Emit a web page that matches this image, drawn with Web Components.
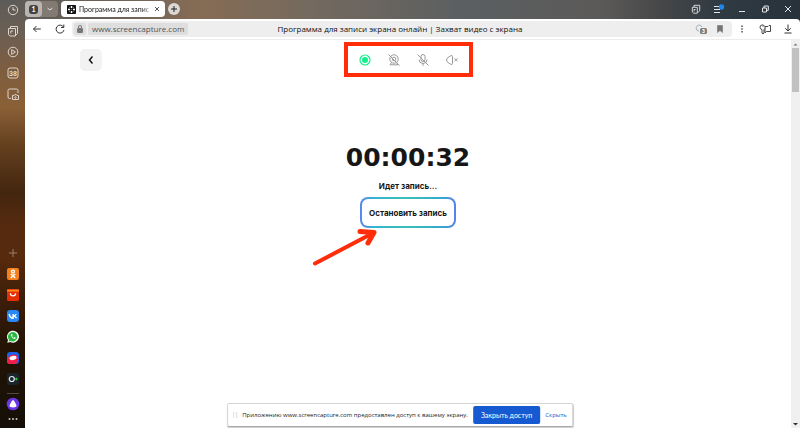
<!DOCTYPE html>
<html lang="ru">
<head>
<meta charset="utf-8">
<title>Программа для записи экрана онлайн</title>
<style>
    html, body {
        margin: 0;
        height: 100%;
    }
    body {
        font-family: Lato, Roboto, sans-serif;
        color: #222;
        overflow: hidden;
    }
</style>
</head>
<body>
<browser-window>
    <side-bar slot="side"></side-bar>
    <tab-strip slot="tabs" title="Программа для запис"></tab-strip>
    <address-bar slot="address" host="www.screencapture.com" heading="Программа для записи экрана онлайн | Захват видео с экрана"></address-bar>
    <recorder-page time="00:00:32">
        <span slot="status">Идет запись...</span>
        <span slot="action">Остановить запись</span>
    </recorder-page>
    <scroll-track slot="scroll"></scroll-track>
    <share-notice slot="notice" action="Закрыть доступ" dismiss="Скрыть">Приложению www.screencapture.com предоставлен доступ к вашему экрану.</share-notice>
</browser-window>

<script>
const reset = `
    :host, * { box-sizing: border-box; }
    button { margin: 0; padding: 0; border: 0; background: none; font: inherit; color: inherit; }
    svg { display: block; fill: none; stroke: currentColor; }
`;

class BrowserWindow extends HTMLElement {
    constructor() {
        super();
        this.attachShadow({ mode: 'open' });
    }

    connectedCallback() {
        this.shadowRoot.innerHTML = `
            <style>
                ${reset}
                :host {
                    display: flex;
                    position: relative;
                    height: 100vh;
                    background: linear-gradient(90deg, #5f5b57 0%, #67605a 12%, #866c55 25%, #756a5e 38%, #5b5f61 58%, #5c5a59 75%, #454647 83%, #2f3a43 90%, #28323b 100%);
                }
                .main {
                    flex: 1;
                    min-width: 0;
                    display: flex;
                    flex-direction: column;
                }
                .sheet {
                    flex: 1;
                    min-height: 0;
                    display: flex;
                    flex-direction: column;
                    background: #fff;
                    border-radius: 4px 4px 0 0;
                    overflow: hidden;
                }
                .view {
                    flex: 1;
                    min-height: 0;
                    display: flex;
                }
            </style>
            <slot name="side"></slot>
            <div class="main">
                <slot name="tabs"></slot>
                <div class="sheet">
                    <slot name="address"></slot>
                    <div class="view">
                        <slot></slot>
                        <slot name="scroll"></slot>
                    </div>
                </div>
            </div>
            <slot name="notice"></slot>
        `;
    }
}

class SideBar extends HTMLElement {
    constructor() {
        super();
        this.attachShadow({ mode: 'open' });
    }

    connectedCallback() {
        const tools = [
            ['История', '<circle cx="7" cy="7" r="4.7"/><path d="M7 4.2V7h2.6"/>'],
            ['Коллекции', '<path d="M4.500 4V2.500h7v7l-1.500 1.500H9.500"/><path d="M2.500 4.500h7v7.500H4L2.500 10.500zM4.800 9.500V7h2.400"/>'],
            ['Видео', '<circle cx="7" cy="7" r="4.8"/><path d="M5.700 4.600v4.800L9.400 7z"/>'],
            ['Погода', '<rect x="2" y="2" width="10" height="10" rx="2"/><text x="7" y="9.500" text-anchor="middle">38</text>'],
            ['Скриншот', '<path d="M5 11.500H3.500A1.500 1.500 0 0 1 2 10V3.500A1.500 1.500 0 0 1 3.500 2h7A1.500 1.500 0 0 1 12 3.500V6"/><path d="M6.500 8.500h1.500l.5-.8h2l.5.8h1.500v4h-6z"/><circle cx="9.500" cy="10.500" r=".7"/>']
        ];
        const apps = [
            ['Одноклассники', '<rect x="1" y="1" width="12" height="12" rx="2" fill="#f4801f"/><g stroke="#fff" stroke-width="1.300"><circle cx="7" cy="4.600" r="1.500"/><path d="M4.700 7.300q2.300 1.500 4.600 0M7 8.400 4.900 11M7 8.400 9.100 11"/></g>'],
            ['AliExpress', '<rect x="1" y="1" width="12" height="12" rx="1.500" fill="#e62e04"/><path d="M1 1.700h12v1.800H1z" fill="#ff8a1c"/><path d="M4.400 5.300c0 3.500 5.200 3.500 5.200 0" stroke="#fff" stroke-width="1.300"/>'],
            ['ВКонтакте', '<rect x="1" y="1" width="12" height="12" rx="3" fill="#2787f5"/><path d="M3.200 5c.5 2.700 1.800 4.200 3.900 4.200V5M7.100 7.200C8.600 7 9.600 6.300 10.200 5M7.500 7.100c1.500.1 2.500.8 3 2.100" stroke="#fff" stroke-width="1.400"/>'],
            ['WhatsApp', '<path d="M1.300 12.800 2 10A6 6 0 1 1 4.200 12z" fill="#fff"/><path d="m2.500 11.600.5-1.800A4.800 4.800 0 1 1 4.500 11z" fill="#2cb742"/><path d="M5 4.200c-.8 1.500 2.400 5.400 4.400 4.500l.3-1-1.300-.6-.6.6C6.900 7.400 6.300 6.500 6.100 5.900l.5-.6L6 4z" fill="#fff"/>'],
            ['Портал', '<rect x="1" y="1" width="12" height="12" rx="3" fill="#1764e8"/><path d="M1 8v2a3 3 0 0 0 3 3h6l3-5z" fill="#f01e4d"/><ellipse cx="7" cy="7" rx="4.300" ry="2.700" transform="rotate(-12 7 7)" fill="#fff" stroke="#f01e4d" stroke-width="1.400"/>'],
            ['Запись', '<rect x="1" y="1" width="12" height="12" rx="3" fill="#1c252b"/><circle cx="5.800" cy="7" r="2.500" stroke="#e5edf0" stroke-width="1.200"/><path d="M9 7h2.600M10.300 5.700v2.600" stroke="#2be03d"/>']
        ];
        const item = ([label, art]) => `<button aria-label="${label}"><svg width="14" height="14" viewBox="0 0 14 14">${art}</svg></button>`;

        this.shadowRoot.innerHTML = `
            <style>
                ${reset}
                :host {
                    flex: none;
                    width: 25px;
                    display: flex;
                    flex-direction: column;
                    justify-content: space-between;
                    align-items: center;
                    color: #ddd5cd;
                    background: linear-gradient(#5c5b59 0%, #6c5f53 8%, #7d5d40 16%, #8a6036 25%, #64401f 34%, #43260f 45%, #542a0f 52%, #572a0d 60%, #3f1f09 69%, #251405 80%, #140f07 100%);
                }
                nav {
                    display: flex;
                    flex-direction: column;
                    align-items: center;
                    gap: 7px;
                    padding-top: 3px;
                }
                .apps svg { stroke: none; }
                .apps { padding: 0 0 5px; }
                .apps .plus svg { stroke: #9a7f70; }
                .alice {
                    width: 12px;
                    display: flex;
                    justify-content: center;
                    border-top: 1px solid #53483c;
                    padding-top: 3px;
                }
                .alice svg { flex: none; }
                .dots { margin-top: -5px; }
                .dots svg { fill: #cfc9c1; }
                text { font: 700 7px Roboto, sans-serif; fill: currentColor; stroke: none; }
            </style>
            <nav aria-label="Инструменты">${tools.map(item).join('')}</nav>
            <nav class="apps" aria-label="Приложения">
                <button class="plus" aria-label="Добавить"><svg width="14" height="14" viewBox="0 0 14 14"><path d="M7 3v8M3 7h8"/></svg></button>
                ${apps.map(item).join('')}
                <button class="alice" aria-label="Алиса"><svg width="14" height="14" viewBox="0 0 14 14"><circle cx="7" cy="7" r="6.300" fill="#6b36e8"/><path d="M7 3c.8 0 3.500 4.600 3.500 5.800C10.500 10 9 10.400 7 10.400S3.500 10 3.500 8.800C3.500 7.600 6.200 3 7 3z" fill="#fff"/></svg></button>
                <button class="dots" aria-label="Ещё"><svg width="14" height="10" viewBox="0 0 14 10"><circle cx="3.500" cy="6" r="1"/><circle cx="7" cy="6" r="1"/><circle cx="10.500" cy="6" r="1"/></svg></button>
            </nav>
        `;
    }
}

class TabStrip extends HTMLElement {
    constructor() {
        super();
        this.attachShadow({ mode: 'open' });
    }

    connectedCallback() {
        const title = this.getAttribute('title') || '';

        this.shadowRoot.innerHTML = `
            <style>
                ${reset}
                :host {
                    flex: none;
                    height: 19px;
                    display: flex;
                    align-items: center;
                    padding-bottom: 1px;
                    font-size: 7px;
                    color: #e4e5e6;
                }
                .group {
                    display: flex;
                    align-items: center;
                    width: 33px;
                    height: 16px;
                    border-radius: 4px;
                    background: #827a73;
                }
                .count {
                    display: flex;
                    align-items: center;
                    justify-content: center;
                    width: 17px;
                    height: 16px;
                    border-radius: 4px;
                    background: #b9b5b1;
                }
                .count b {
                    width: 9px;
                    height: 9px;
                    border-radius: 3px;
                    background: #454341;
                    color: #fff;
                    line-height: 9px;
                    text-align: center;
                }
                .group .more { flex: 1; display: flex; justify-content: center; }
                .tab {
                    display: flex;
                    align-items: center;
                    gap: 3px;
                    width: 104px;
                    height: 16px;
                    margin-left: 3px;
                    padding: 0 4px 0 6px;
                    border-radius: 4px;
                    background: #fff;
                    color: #111;
                }
                .tab span {
                    flex: 1;
                    min-width: 0;
                    white-space: nowrap;
                    line-height: 16px;
                    -webkit-mask-image: linear-gradient(90deg, #000 88%, transparent 105%);
                    mask-image: linear-gradient(90deg, #000 88%, transparent 105%);
                }
                .tab svg { flex: none; }
                .close { color: #555; }
                .add {
                    width: 12px;
                    height: 12px;
                    margin-left: 3px;
                    border-radius: 50%;
                    background: #dcd8d4;
                    color: #222;
                }
                .controls {
                    display: flex;
                    gap: 11px;
                    margin-left: auto;
                    padding-right: 6px;
                }
            </style>
            <div class="group">
                <button class="count" aria-label="Группа вкладок"><b>1</b></button>
                <button class="more" aria-label="Список вкладок"><svg width="8" height="8" viewBox="0 0 8 8"><path d="m1.500 3 2.500 2 2.500-2"/></svg></button>
            </div>
            <div class="tab">
                <svg width="9" height="9" viewBox="0 0 9 9" stroke="none"><rect width="9" height="9" rx="2" fill="#111"/><path d="M4.500 1v7M1 4.500h7" stroke="#fff" stroke-width="1.500" stroke-dasharray="2 3"/><circle cx="4.500" cy="4.500" r=".8" fill="#fff"/><path d="m2 2 1 1M7 2 6 3M2 7l1-1M7 7 6 6" stroke="#aaa" stroke-width=".6"/></svg>
                <span>${title}</span>
                <button class="close" aria-label="Закрыть вкладку"><svg width="8" height="8" viewBox="0 0 8 8"><path d="m2 2 4 4M6 2 2 6"/></svg></button>
            </div>
            <button class="add" aria-label="Новая вкладка"><svg width="12" height="12" viewBox="0 0 12 12"><path d="M6 3v6M3 6h6"/></svg></button>
            <div class="controls">
                <button aria-label="Коллекция"><svg width="12" height="12" viewBox="0 0 12 12" stroke-width=".9"><path d="M4 4V2.300h5.700v5.500L8.300 9H7.500M2.300 4.300h5v5.900H3.600L2.300 9zM4 8.300V6.500h1.500"/></svg></button>
                <button aria-label="Меню"><svg width="12" height="12" viewBox="0 0 12 12"><path d="M1 3.500h5M1 6.500h6M1 9.500h6"/><circle cx="8.500" cy="4" r="2.700" fill="#1a86ee" stroke="none"/></svg></button>
                <button aria-label="Свернуть"><svg width="12" height="12" viewBox="0 0 12 12"><path d="M3 8.500h6"/></svg></button>
                <button aria-label="Восстановить"><svg width="12" height="12" viewBox="0 0 12 12"><path d="M3.500 5h4v4h-4zM5 5V3h4.300v4.300H7.500"/></svg></button>
                <button aria-label="Закрыть"><svg width="12" height="12" viewBox="0 0 12 12"><path d="m3 3 6 6M9 3 3 9"/></svg></button>
            </div>
        `;
    }
}

class AddressBar extends HTMLElement {
    constructor() {
        super();
        this.attachShadow({ mode: 'open' });
    }

    connectedCallback() {
        const host = this.getAttribute('host') || '';
        const heading = this.getAttribute('heading') || '';

        this.shadowRoot.innerHTML = `
            <style>
                ${reset}
                :host {
                    flex: none;
                    display: flex;
                    align-items: center;
                    height: 21px;
                    padding: 0 6px;
                    border-bottom: 1px solid #ececec;
                    font-family: "Open Sans", "Noto Sans", sans-serif;
                    font-size: 8px;
                    color: #333;
                }
                .nav, .tools {
                    display: flex;
                    gap: 11px;
                }
                .nav { padding-right: 6px; }
                .tools { padding-left: 4px; }
                .field {
                    flex: 1;
                    display: grid;
                    grid-template-columns: 1fr auto 1fr;
                    align-items: center;
                    height: 16px;
                    padding: 0 6px 0 2px;
                    border-radius: 4px;
                    background: #eee;
                    white-space: nowrap;
                }
                .site { display: flex; gap: 2px; }
                .lock, .host {
                    height: 12px;
                    border-radius: 2px;
                    background: #dedede;
                }
                .host {
                    padding: 0 4px;
                    line-height: 12px;
                    color: #555;
                }
                .heading {
                    line-height: 12px;
                    color: #111;
                }
                .marks { display: flex; gap: 6px; justify-content: flex-end; color: #808080; }
                text { font: 700 5px Roboto, sans-serif; fill: #fff; stroke: none; }
            </style>
            <div class="nav">
                <button aria-label="Назад"><svg width="12" height="12" viewBox="0 0 12 12"><path d="M9.800 6H2.500M5.500 3 2.500 6l3 3"/></svg></button>
                <button aria-label="Обновить"><svg width="12" height="12" viewBox="0 0 12 12"><path d="M9.500 4A4 4 0 1 0 10 7M9.800 1.500v3H7"/></svg></button>
            </div>
            <div class="field">
                <div class="site">
                    <button class="lock" aria-label="Сведения о сайте"><svg width="12" height="12" viewBox="0 0 12 12"><rect x="3.500" y="5.500" width="5" height="4" rx=".5" fill="#777" stroke="#777"/><path d="M4.500 5.500V4a1.500 1.500 0 0 1 3 0v1.500" stroke="#777"/></svg></button>
                    <button class="host">${host}</button>
                </div>
                <span class="heading">${heading}</span>
                <div class="marks">
                    <button aria-label="Отзывы"><svg width="14" height="12" viewBox="0 0 14 12"><path d="M5 8H4.300A3 3 0 1 1 8 4" stroke="#aaa"/><rect x="6" y="5" width="7" height="6" rx="1.500" fill="#808080" stroke="none"/><text x="9.500" y="9.900" text-anchor="middle">3</text></svg></button>
                    <button aria-label="Закладка"><svg width="12" height="12" viewBox="0 0 12 12"><path d="M3.500 2.500h5v7L6 7.500l-2.500 2z" fill="#757575" stroke="#757575" stroke-width=".6"/></svg></button>
                </div>
            </div>
            <div class="tools">
                <button aria-label="Ещё"><svg width="12" height="12" viewBox="0 0 12 12"><path d="M6 2.500V4M6 5.300v1.500M6 8v1.500" stroke-width="1.300"/></svg></button>
                <button aria-label="Пароли"><svg width="12" height="12" viewBox="0 0 12 12" stroke-width=".9"><path d="M5.500 3.500a2.300 2.300 0 1 0-2.500 3V10l1 1 1-1V6.500l1-1M7 3.500h2l1-1h1.500v6H7.500L6 9.800V3.500zM3.500 3.200h1"/></svg></button>
                <button aria-label="Загрузки"><svg width="12" height="12" viewBox="0 0 12 12"><path d="M6 1.500v6.500M3.200 5.300 6 8l2.800-2.700M2.500 10h7"/></svg></button>
            </div>
        `;
    }
}

class RecorderPage extends HTMLElement {
    constructor() {
        super();
        this.attachShadow({ mode: 'open' });
    }

    connectedCallback() {
        const time = this.getAttribute('time') || '00:00:00';

        this.shadowRoot.innerHTML = `
            <style>
                ${reset}
                :host {
                    flex: 1;
                    min-width: 0;
                    display: block;
                    font-family: Inter, "DejaVu Sans", sans-serif;
                    font-weight: 700;
                    color: #161616;
                }
                header {
                    display: grid;
                    grid-template-columns: 1fr auto 1fr;
                    align-items: center;
                    padding: 2px 55px 0;
                }
                .back {
                    width: 22px;
                    height: 22px;
                    border-radius: 5px;
                    background: #f2f2f2;
                }
                .sources {
                    display: flex;
                    gap: 15px;
                    padding: 7px 10px 6px;
                    border: 4px solid #ff2d08;
                    color: #999;
                }
                main {
                    display: flex;
                    flex-direction: column;
                    align-items: center;
                    padding-top: 66px;
                }
                time {
                    font-family: "DejaVu Sans", sans-serif;
                    font-size: 25px;
                    line-height: 30px;
                }
                .status {
                    margin: 8px 0 6px;
                    font-size: 8px;
                    line-height: 10px;
                }
                .stop-wrap { position: relative; }
                .stop {
                    height: 31px;
                    padding: 0 7px;
                    border: 2px solid transparent;
                    border-radius: 8px;
                    background:
                        linear-gradient(#fff, #fff) padding-box,
                        linear-gradient(90deg, #5a86ee, #35b4d0 14%, #38c0b4 50%, #35a8d0 86%, #5a80ee) border-box;
                    font-size: 8px;
                    line-height: 10px;
                }
                .pointer {
                    position: absolute;
                    right: 78px;
                    top: 31px;
                    stroke: #ff2d08;
                    stroke-width: 4;
                    stroke-linecap: round;
                    stroke-linejoin: round;
                }
            </style>
            <header>
                <button class="back" aria-label="Назад"><svg width="22" height="22" viewBox="0 0 22 22" stroke-width="1.500"><path d="M12.500 7.500 9.500 11l3 3.500"/></svg></button>
                <div class="sources">
                    <button aria-label="Экран"><svg width="14" height="14" viewBox="0 0 14 14"><circle cx="7" cy="7" r="5" stroke="#12f08b" stroke-width="1.200"/><circle cx="7" cy="7" r="3" fill="#12f08b" stroke="none"/></svg></button>
                    <button aria-label="Камера"><svg width="14" height="14" viewBox="0 0 14 14"><circle cx="7" cy="6" r="4.200"/><circle cx="7" cy="6" r="1.800"/><path d="M4.500 9.500 3 11.800h8L9.500 9.500M1.500 1.500l11 11"/></svg></button>
                    <button aria-label="Микрофон"><svg width="14" height="14" viewBox="0 0 14 14"><rect x="5" y="1.500" width="4" height="7" rx="2"/><path d="M3 6.500a4 4 0 0 0 8 0M7 10.500v2.300M1.500 1.500l11 11"/></svg></button>
                    <button aria-label="Звук"><svg width="14" height="14" viewBox="0 0 14 14"><path d="M7.500 3.300v7.400q-.3 1.300-1.600.6L3 9.500Q1.600 8.800 1.600 7T3 4.500l2.900-1.800q1.300-.7 1.600.6zM9.500 5.300l3 3M12.500 5.300l-3 3"/></svg></button>
                </div>
            </header>
            <main>
                <time>${time}</time>
                <div class="status"><slot name="status"></slot></div>
                <div class="stop-wrap">
                    <button class="stop"><slot name="action"></slot></button>
                    <svg class="pointer" width="66" height="38" viewBox="0 0 66 38"><path d="M3 35.500 62 4.500"/><path d="M48 3.500l14 1-6 10.500" stroke-width="5"/></svg>
                </div>
            </main>
        `;
    }
}

class ScrollTrack extends HTMLElement {
    constructor() {
        super();
        this.attachShadow({ mode: 'open' });
    }

    connectedCallback() {
        this.shadowRoot.innerHTML = `
            <style>
                ${reset}
                :host {
                    flex: none;
                    width: 9px;
                    display: flex;
                    flex-direction: column;
                    padding: 0 1px;
                    background: #f0f0f0;
                    color: #444;
                }
                .thumb { height: 44px; background: #c1c1c1; }
                .down { margin-top: auto; }
            </style>
            <button aria-label="Вверх"><svg width="7" height="8" viewBox="0 0 7 8"><path d="M1.500 5.500h4l-2-2z" fill="#777" stroke="none"/></svg></button>
            <div class="thumb"></div>
            <button class="down" aria-label="Вниз"><svg width="7" height="8" viewBox="0 0 7 8"><path d="M1 3h5L3.500 5.500z" fill="#333" stroke="none"/></svg></button>
        `;
    }
}

class ShareNotice extends HTMLElement {
    constructor() {
        super();
        this.attachShadow({ mode: 'open' });
    }

    connectedCallback() {
        const action = this.getAttribute('action') || '';
        const dismiss = this.getAttribute('dismiss') || '';

        this.shadowRoot.innerHTML = `
            <style>
                ${reset}
                :host {
                    position: absolute;
                    left: 50%;
                    bottom: 1px;
                    transform: translateX(-50%);
                    display: flex;
                    align-items: center;
                    gap: 5px;
                    height: 24px;
                    padding: 0 5px;
                    border: 1px solid #d4d4d4;
                    border-bottom-color: #aaa;
                    border-radius: 2px;
                    background: #fff;
                    box-shadow: 0 1px 1px #ccc;
                    font-family: "Open Sans", "Noto Sans", sans-serif;
                    font-size: 6px;
                    line-height: 10px;
                    white-space: nowrap;
                }
                .grip { width: 4px; height: 6px; border: 1px solid #ddd; border-width: 0 1px; }
                button {
                    height: 18px;
                    padding: 0 8px;
                    border-radius: 2px;
                    background: #165ad1;
                    color: #fff;
                    font-family: Lato, Roboto, sans-serif;
                    font-size: 7px;
                }
                a { color: #165ad1; text-decoration: none; }
            </style>
            <i class="grip"></i>
            <slot></slot>
            <button>${action}</button>
            <a href="#">${dismiss}</a>
        `;
    }
}

customElements.define('browser-window', BrowserWindow);
customElements.define('side-bar', SideBar);
customElements.define('tab-strip', TabStrip);
customElements.define('address-bar', AddressBar);
customElements.define('recorder-page', RecorderPage);
customElements.define('scroll-track', ScrollTrack);
customElements.define('share-notice', ShareNotice);
</script>
</body>
</html>
